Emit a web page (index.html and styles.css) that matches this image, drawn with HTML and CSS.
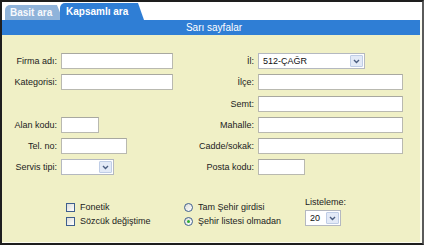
FILE: index.html
```html
<!DOCTYPE html>
<html lang="tr">
<head>
<meta charset="utf-8">
<title>Sarı sayfalar</title>
<link rel="stylesheet" href="styles.css">
</head>
<body>
<div class="frame">
  <div class="tabs">
    <div class="tab tab-off">Basit ara</div>
    <div class="tab tab-on">Kapsamlı ara</div>
  </div>
  <div class="panel">
    <div class="bar">Sarı sayfalar</div>
    <div class="body">
      <div class="form">
        <label class="lbl">Firma adı:</label>
        <div class="field"><span class="inp w112"></span></div>
        <label class="lbl">İl:</label>
        <div class="field">
          <span class="sel w107"><span class="sel-val">512-ÇAĞR</span><span class="sel-btn"><svg width="7" height="5" viewBox="0 0 7 5"><path d="M1 1 L3.5 3.5 L6 1" fill="none" stroke="#4a5d80" stroke-width="1.4"/></svg></span></span>
        </div>

        <label class="lbl">Kategorisi:</label>
        <div class="field"><span class="inp w112"></span></div>
        <label class="lbl">İlçe:</label>
        <div class="field"><span class="inp w145"></span></div>

        <span class="lbl"></span>
        <div class="field"></div>
        <label class="lbl">Semt:</label>
        <div class="field"><span class="inp w145"></span></div>

        <label class="lbl">Alan kodu:</label>
        <div class="field"><span class="inp w38"></span></div>
        <label class="lbl">Mahalle:</label>
        <div class="field"><span class="inp w145"></span></div>

        <label class="lbl">Tel. no:</label>
        <div class="field"><span class="inp w66"></span></div>
        <label class="lbl">Cadde/sokak:</label>
        <div class="field"><span class="inp w145"></span></div>

        <label class="lbl">Servis tipi:</label>
        <div class="field">
          <span class="sel w53"><span class="sel-val"></span><span class="sel-btn"><svg width="7" height="5" viewBox="0 0 7 5"><path d="M1 1 L3.5 3.5 L6 1" fill="none" stroke="#4a5d80" stroke-width="1.4"/></svg></span></span>
        </div>
        <label class="lbl">Posta kodu:</label>
        <div class="field"><span class="inp w47"></span></div>
      </div>

      <div class="options">
        <div class="opt-col checks">
          <div class="opt"><span class="cb"></span>Fonetik</div>
          <div class="opt"><span class="cb"></span>Sözcük değiştime</div>
        </div>
        <div class="opt-col radios">
          <div class="opt"><span class="rb"></span>Tam Şehir girdisi</div>
          <div class="opt"><span class="rb on"></span>Şehir listesi olmadan</div>
        </div>
        <div class="opt-col listing">
          <div class="list-lbl">Listeleme:</div>
          <span class="sel w36"><span class="sel-val">20</span><span class="sel-btn"><svg width="7" height="5" viewBox="0 0 7 5"><path d="M1 1 L3.5 3.5 L6 1" fill="none" stroke="#4a5d80" stroke-width="1.4"/></svg></span></span>
        </div>
      </div>
    </div>
  </div>
</div>
</body>
</html>
```

FILE: styles.css
```css
* { box-sizing: border-box; }
html, body { margin: 0; padding: 0; background: #ffffff; }
body {
  font-family: "Liberation Sans", Arial, sans-serif;
  font-size: 9px;
  color: #222222;
}
.frame {
  width: 424px;
  height: 245px;
  border: 2px solid #1e1e1e;
  border-right-color: #5a5a5a;
  display: flex;
  flex-direction: column;
  background: #ffffff;
}
.tabs {
  height: 18px;
  display: flex;
  align-items: flex-end;
  padding-left: 3px;
}
.tab {
  position: relative;
  color: #ffffff;
  font-weight: bold;
  font-size: 10px;
  border-radius: 5px 0 0 0;
  display: flex;
  align-items: center;
}
.tab::after {
  content: "";
  position: absolute;
  top: 0;
  right: -6px;
  width: 0;
  height: 0;
  border-right: 6px solid transparent;
}
.tab-off {
  height: 15px;
  width: 52px;
  padding-left: 5px;
  background: #8fb3da;
  color: #f7f9fc;
}
.tab-off::after { border-bottom: 15px solid #8fb3da; }
.tab-on {
  height: 17px;
  width: 78px;
  margin-left: 3px;
  padding-left: 6px;
  background: #2f7ed5;
  z-index: 1;
}
.tab-on::after { border-bottom: 17px solid #2f7ed5; }
.panel {
  flex: 1;
  display: flex;
  flex-direction: column;
  border-right: 2px solid #fbfbf0;
  border-bottom: 1px solid #fbfbf0;
}
.bar {
  height: 15px;
  background: #2f7ed5;
  color: #ffffff;
  font-size: 10px;
  display: flex;
  align-items: center;
  justify-content: center;
  padding-left: 6px;
}
.body {
  flex: 1;
  background: #f0f0c6;
  padding-top: 18px;
}
.form {
  display: grid;
  grid-template-columns: 59px 120px 77px 1fr;
  grid-auto-rows: 16px;
  row-gap: 5.3px;
}
.lbl {
  text-align: right;
  padding-right: 4px;
  line-height: 16px;
  white-space: nowrap;
}
.field { display: flex; align-items: center; }
.inp {
  display: block;
  height: 16px;
  background: #ffffff;
  border: 1px solid #b9b9b0;
  border-top-color: #a8a8a0;
}
.w112 { width: 112px; }
.w145 { width: 145px; }
.w38 { width: 38px; }
.w66 { width: 66px; }
.w47 { width: 47px; }
.sel {
  display: flex;
  align-items: center;
  height: 16px;
  background: #ffffff;
  border: 1px solid #b4b8c0;
  padding: 1px;
}
.w107 { width: 107px; }
.w53 { width: 53px; }
.w36 { width: 36px; }
.sel-val { flex: 1; padding-left: 3px; font-size: 9px; color: #111; line-height: 12px; }
.sel-btn {
  width: 13px;
  height: 12px;
  background: #e3eaf7;
  border: 1px solid #bfcde6;
  border-radius: 1px;
  display: flex;
  align-items: center;
  justify-content: center;
}
.sel-btn svg { display: block; }
.options {
  display: flex;
  margin-top: 25px;
  padding-left: 64px;
}
.opt-col { display: flex; flex-direction: column; }
.checks { width: 118px; }
.radios { width: 121px; }
.opt {
  display: flex;
  align-items: center;
  height: 14px;
  white-space: nowrap;
}
.cb {
  width: 9px;
  height: 9px;
  border: 1px solid #3f5f8e;
  background: linear-gradient(135deg, #dcdcd6, #ffffff);
  margin-right: 5px;
}
.rb {
  width: 9px;
  height: 9px;
  border: 1px solid #3f5f8e;
  border-radius: 50%;
  background: linear-gradient(135deg, #dcdcd6, #ffffff);
  margin-right: 5px;
  display: flex;
  align-items: center;
  justify-content: center;
}
.rb.on::before {
  content: "";
  width: 3px;
  height: 3px;
  border-radius: 50%;
  background: #2fae2f;
}
.listing { margin-top: -4px; }
.list-lbl { line-height: 12px; margin-bottom: 2px; }
```
